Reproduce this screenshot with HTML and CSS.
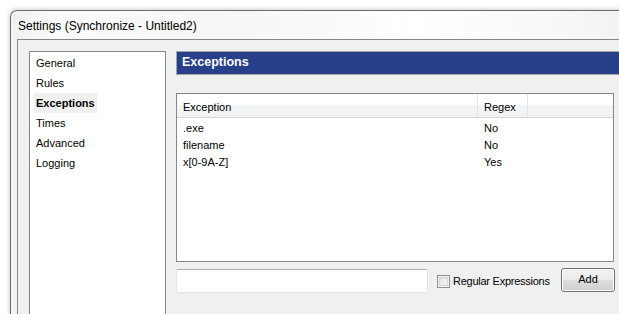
FILE: index.html
```html
<!DOCTYPE html>
<html>
<head>
<meta charset="utf-8">
<link rel="stylesheet" href="styles.css">
</head>
<body>
<div class="page">
  <div class="window">
    <div class="titlebar">Settings (Synchronize - Untitled2)</div>
    <div class="client">
      <div class="navlist">
        <div class="navitem">General</div>
        <div class="navitem">Rules</div>
        <div class="navitem active">Exceptions</div>
        <div class="navitem">Times</div>
        <div class="navitem">Advanced</div>
        <div class="navitem">Logging</div>
      </div>
      <div class="panel">
        <div class="panel-header">Exceptions</div>
        <div class="table">
          <div class="thead">
            <div class="th col1">Exception</div>
            <div class="th col2">Regex</div>
            <div class="th col3"></div>
          </div>
          <div class="tbody">
            <div class="tr"><div class="td col1">.exe</div><div class="td col2">No</div></div>
            <div class="tr"><div class="td col1">filename</div><div class="td col2">No</div></div>
            <div class="tr"><div class="td col1">x[0-9A-Z]</div><div class="td col2">Yes</div></div>
          </div>
        </div>
        <div class="bottom-row">
          <div class="textbox"></div>
          <label class="check"><span class="checkbox"></span><span class="check-label">Regular Expressions</span></label>
          <div class="button">Add</div>
        </div>
      </div>
    </div>
  </div>
</div>
</body>
</html>
```

FILE: styles.css
```css
html, body {
  margin: 0;
  padding: 0;
  background: #ffffff;
}

.page {
  width: 619px;
  height: 314px;
  overflow: hidden;
  box-sizing: border-box;
  padding: 10px 0 0 10px;
  background: #ffffff;
  font-family: "Liberation Sans", Arial, sans-serif;
  font-size: 11px;
  color: #000000;
}

.window {
  height: 420px;
  width: 640px;
  border: 1px solid #6c6c6c;
  border-right: 0;
  border-bottom: 0;
  border-top-left-radius: 7px;
  padding-left: 6px;
  background: linear-gradient(to right, #f1f1f1 0%, #fbfbfb 8%, #f6f6f6 30%, #fafafa 50%, #ffffff 62%, #f8f8f8 85%, #f0f0f0 100%);
  box-shadow: -1px -1px 4px rgba(0, 0, 0, 0.18);
}

.titlebar {
  height: 28px;
  display: flex;
  align-items: center;
  padding-left: 1px;
  padding-top: 1px;
  box-sizing: border-box;
  font-size: 12px;
  color: #000000;
}

.client {
  height: 380px;
  border-top: 1px solid #858585;
  border-left: 1px solid #858585;
  background: #f0f0f0;
  display: flex;
  align-items: flex-start;
  gap: 10px;
  padding: 11px 0 0 11px;
}

.navlist {
  width: 137px;
  height: 320px;
  box-sizing: border-box;
  border: 1px solid #828790;
  background: #ffffff;
  padding-top: 1px;
  flex: none;
}

.navitem {
  height: 20px;
  line-height: 20px;
  margin-left: 4px;
  padding-left: 2px;
  width: fit-content;
  padding-right: 2px;
}

.navitem.active {
  font-weight: bold;
  background: #f0f0f0;
}

.panel {
  width: 460px;
  flex: none;
  display: flex;
  flex-direction: column;
}

.panel-header {
  height: 24px;
  box-sizing: border-box;
  border: 1px solid #a4a4a4;
  border-right: 0;
  background: #283f8a;
  color: #ffffff;
  font-weight: bold;
  font-size: 12.5px;
  line-height: 21px;
  padding-left: 5px;
}

.table {
  margin-top: 18px;
  width: 438px;
  height: 169px;
  box-sizing: border-box;
  border: 1px solid #828790;
  background: #ffffff;
}

.thead {
  display: flex;
  height: 24px;
  box-sizing: border-box;
  border-bottom: 1px solid #d5d5d5;
  background: linear-gradient(to bottom, #ffffff 0%, #ffffff 45%, #f4f5f6 50%, #f1f2f4 100%);
}

.th {
  box-sizing: border-box;
  padding: 7px 0 0 6px;
  border-right: 1px solid #e3e4e6;
}

.th.col3 {
  border-right: 0;
  flex: 1;
}

.col1 {
  width: 301px;
  flex: none;
  box-sizing: border-box;
}

.col2 {
  width: 50px;
  flex: none;
  box-sizing: border-box;
}

.tbody {
  padding-top: 2px;
}

.tr {
  display: flex;
  height: 17px;
  line-height: 17px;
}

.td {
  padding-left: 6px;
}

.bottom-row {
  width: 439px;
  margin-top: 6px;
  display: flex;
  align-items: flex-start;
}

.textbox {
  width: 252px;
  height: 24px;
  margin-top: 1px;
  box-sizing: border-box;
  border: 1px solid #e2e3ea;
  border-top-color: #abadb3;
  border-radius: 2px;
  background: #ffffff;
}

.check {
  display: flex;
  align-items: center;
  margin-left: 9px;
  height: 26px;
}

.checkbox {
  width: 13px;
  height: 13px;
  box-sizing: border-box;
  border: 1px solid #8e8f8f;
  background: linear-gradient(135deg, #dcdcdc 0%, #f2f2f2 70%, #ffffff 100%);
  box-shadow: inset 0 0 0 1px #f4f4f4, inset 0 0 0 2px #d6d6d6;
}

.check-label {
  margin-left: 3px;
  letter-spacing: -0.25px;
}

.button {
  margin-left: auto;
  width: 54px;
  height: 24px;
  box-sizing: border-box;
  border: 1px solid #707070;
  border-radius: 3px;
  background: linear-gradient(to bottom, #f2f2f2 0%, #ebebeb 48%, #dddddd 52%, #cfcfcf 100%);
  box-shadow: inset 0 0 0 1px #fcfcfc;
  text-align: center;
  line-height: 21px;
}
```
